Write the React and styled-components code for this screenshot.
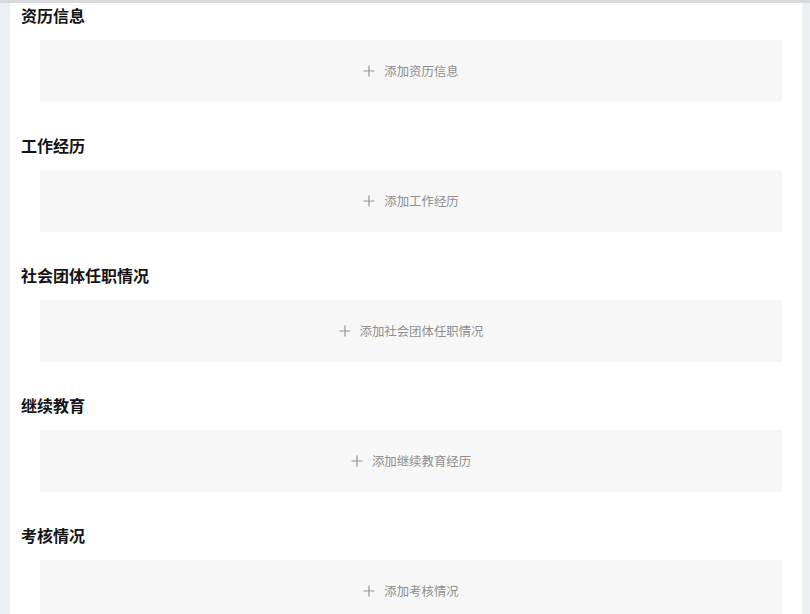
import styled, { createGlobalStyle } from "styled-components";

const Global = createGlobalStyle`
  html, body {
    margin: 0;
    padding: 0;
    background: #eceff6;
  }
  body {
    font-family: "Noto Sans CJK SC", "Noto Sans", sans-serif;
    height: 614px;
    overflow: hidden;
  }
`;

const Page = styled.div`
  display: flex;
  height: 614px;
  padding: 0 7px 0 10px;
  box-sizing: border-box;
  border-top: 3px solid #d9dadd;
`;

const Card = styled.div`
  flex: 1;
  background: #fff;
  border-right: 1px solid #f3f5fb;
  padding: 1px 20px 0 11px;
`;

const Section = styled.div`
  display: flex;
  flex-direction: column;
  margin-bottom: 32px;
`;

const Title = styled.div`
  font-size: 16px;
  line-height: 22px;
  font-weight: 700;
  color: #141414;
  margin-bottom: 14px;
`;

const AddBox = styled.div`
  margin-left: 19px;
  height: 62px;
  background: #f7f7f7;
  display: flex;
  align-items: center;
  justify-content: center;
  gap: 9px;
  color: #8f8f8f;
  font-size: 12.4px;
  cursor: pointer;
`;

const Plus = () => (
  <svg width="12" height="12" viewBox="0 0 12 12">
    <path d="M6 0.5V11.5M0.5 6H11.5" stroke="#949494" strokeWidth="1.2" />
  </svg>
);

const sections = [
  ["资历信息", "添加资历信息"],
  ["工作经历", "添加工作经历"],
  ["社会团体任职情况", "添加社会团体任职情况"],
  ["继续教育", "添加继续教育经历"],
  ["考核情况", "添加考核情况"],
];

export default function App() {
  return (
    <>
      <Global />
      <Page>
        <Card>
          {sections.map(([title, label]) => (
            <Section key={title}>
              <Title>{title}</Title>
              <AddBox>
                <Plus />
                <span>{label}</span>
              </AddBox>
            </Section>
          ))}
        </Card>
      </Page>
    </>
  );
}
